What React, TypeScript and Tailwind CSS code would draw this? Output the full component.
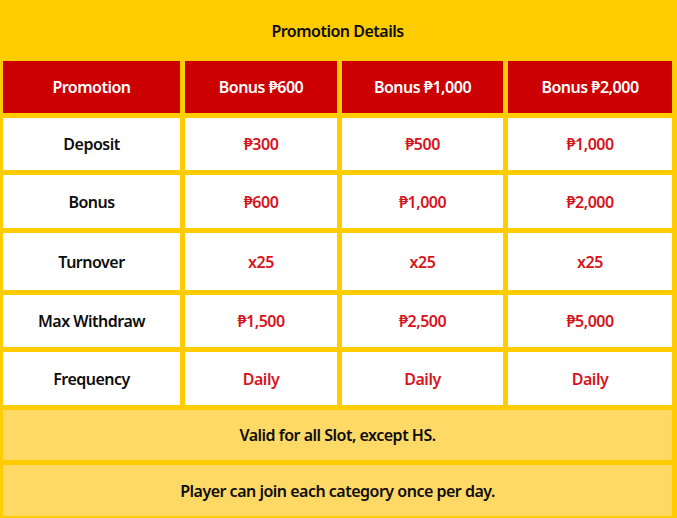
import React from "react";

const cols = ["Bonus ₱600", "Bonus ₱1,000", "Bonus ₱2,000"];
const rows: { label: string; values: string[]; h: string }[] = [
  { label: "Deposit", values: ["₱300", "₱500", "₱1,000"], h: "h-[52px]" },
  { label: "Bonus", values: ["₱600", "₱1,000", "₱2,000"], h: "h-[53px]" },
  { label: "Turnover", values: ["x25", "x25", "x25"], h: "h-[57px]" },
  { label: "Max Withdraw", values: ["₱1,500", "₱2,500", "₱5,000"], h: "h-[52px]" },
  { label: "Frequency", values: ["Daily", "Daily", "Daily"], h: "h-[53px]" },
];

export default function App() {
  return (
    <div
      className="min-h-[518px] w-[677px] bg-[#ffcc00] pl-[3px] pr-[5px] text-[16px] tracking-[-0.5px] font-semibold"
      style={{ fontFamily: '"Noto Sans", "DejaVu Sans", sans-serif' }}
    >
      <div className="h-[61px] flex items-center justify-center text-[#0d0d0d]">Promotion Details</div>
      <div className="grid grid-cols-[177px_152px_161px_164px] gap-x-[5px] gap-y-[5px]">
        <div className="h-[52px] bg-[#cc0000] text-white flex items-center justify-center">Promotion</div>
        {cols.map((c) => (
          <div key={c} className="h-[52px] bg-[#cc0000] text-white flex items-center justify-center">
            {c}
          </div>
        ))}
        {rows.map((r) => (
          <React.Fragment key={r.label}>
            <div className={`${r.h} bg-white text-[#0d0d0d] flex items-center justify-center`}>{r.label}</div>
            {r.values.map((v, i) => (
              <div key={i} className={`${r.h} bg-white text-[#d7141c] flex items-center justify-center`}>
                {v}
              </div>
            ))}
          </React.Fragment>
        ))}
        <div className="col-span-4 h-[50px] bg-[#ffd966] text-[#0d0d0d] flex items-center justify-center">
          Valid for all Slot, except HS.
        </div>
        <div className="col-span-4 h-[51px] bg-[#ffd966] text-[#0d0d0d] flex items-center justify-center">
          Player can join each category once per day.
        </div>
      </div>
    </div>
  );
}
